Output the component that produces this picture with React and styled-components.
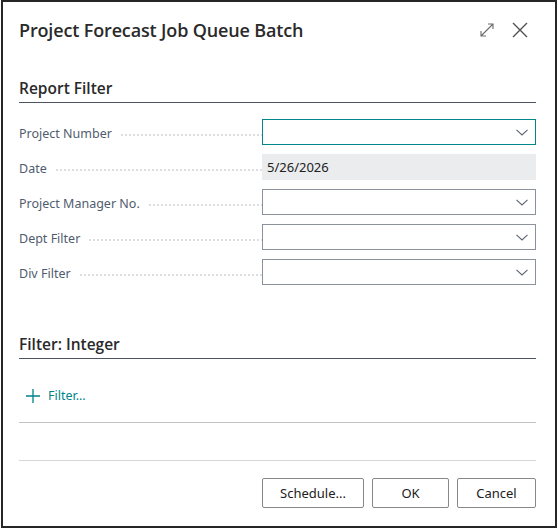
import React from "react";
import styled, { createGlobalStyle } from "styled-components";

const GlobalStyle = createGlobalStyle`
  html, body {
    margin: 0;
    padding: 0;
    background: #ffffff;
  }
  body {
    font-family: "Noto Sans", "Open Sans", sans-serif;
    color: #212121;
  }
`;

const fields = [
  { label: "Project Number", kind: "lookup", focused: true },
  { label: "Date", kind: "readonly", value: "5/26/2026" },
  { label: "Project Manager No.", kind: "lookup" },
  { label: "Dept Filter", kind: "lookup" },
  { label: "Div Filter", kind: "lookup" },
];

function Chevron() {
  return (
    <svg width="12" height="7" viewBox="0 0 12 7">
      <path d="M0.5 0.8 L6 6 L11.5 0.8" fill="none" stroke="#5c6472" strokeWidth="1.1" />
    </svg>
  );
}

function ExpandIcon() {
  return (
    <svg width="16" height="16" viewBox="0 0 16 16">
      <path
        d="M2 14 L14 2 M9 2 H14 V7 M2 9 V14 H7"
        fill="none"
        stroke="#6b6b6b"
        strokeWidth="1.1"
      />
    </svg>
  );
}

function CloseIcon() {
  return (
    <svg width="16" height="16" viewBox="0 0 16 16">
      <path d="M1 1 L15 15 M15 1 L1 15" fill="none" stroke="#505050" strokeWidth="1.4" />
    </svg>
  );
}

function PlusIcon() {
  return (
    <svg width="16" height="16" viewBox="0 0 16 16">
      <path d="M8 1 V15 M1 8 H15" fill="none" stroke="#00838a" strokeWidth="1.3" />
    </svg>
  );
}

export default function App() {
  return (
    <>
      <GlobalStyle />
      <Dialog>
        <Header>
          <Title>Project Forecast Job Queue Batch</Title>
          <HeaderActions>
            <IconButton aria-label="Expand">
              <ExpandIcon />
            </IconButton>
            <IconButton aria-label="Close">
              <CloseIcon />
            </IconButton>
          </HeaderActions>
        </Header>

        <SectionTitle>Report Filter</SectionTitle>
        <FieldList>
          {fields.map((field) => (
            <FieldRow key={field.label}>
              <Label>
                <span>{field.label}</span>
                <Leader />
              </Label>
              {field.kind === "readonly" ? (
                <ReadOnlyBox>{field.value}</ReadOnlyBox>
              ) : (
                <LookupBox $focused={field.focused}>
                  <Chevron />
                </LookupBox>
              )}
            </FieldRow>
          ))}
        </FieldList>

        <SectionTitle $gap={48}>Filter: Integer</SectionTitle>
        <FilterAction>
          <PlusIcon />
          <span>Filter...</span>
        </FilterAction>
        <Divider />

        <Footer>
          <Button $width={102}>Schedule...</Button>
          <Button $width={77}>OK</Button>
          <Button $width={79}>Cancel</Button>
        </Footer>
      </Dialog>
    </>
  );
}

const Dialog = styled.div`
  box-sizing: border-box;
  width: 556px;
  height: 528px;
  margin-left: 1px;
  border: 2px solid #262626;
  padding: 0 19px 0 16px;
  display: flex;
  flex-direction: column;
`;

const Header = styled.div`
  height: 56px;
  display: flex;
  align-items: center;
  justify-content: space-between;
`;

const Title = styled.h1`
  margin: 0;
  font-family: "Open Sans", "Noto Sans", sans-serif;
  font-size: 18px;
  font-weight: 600;
  color: #2a2a2a;
  letter-spacing: -0.15px;
`;

const HeaderActions = styled.div`
  display: flex;
  align-items: center;
  gap: 17px;
  margin-right: 8px;
`;

const IconButton = styled.button`
  border: none;
  background: none;
  padding: 0;
  display: flex;
  cursor: pointer;
`;

const SectionTitle = styled.h2`
  margin: ${(p) => p.$gap || 19}px 0 0;
  padding-bottom: 3px;
  font-family: "Open Sans", "Noto Sans", sans-serif;
  font-size: 15.5px;
  font-weight: 600;
  line-height: 22px;
  color: #2a2a2a;
  border-bottom: 1px solid #4d5564;
`;

const FieldList = styled.div`
  margin-top: 16px;
  display: flex;
  flex-direction: column;
  gap: 9px;
`;

const FieldRow = styled.div`
  display: flex;
  align-items: center;
  height: 26px;
`;

const Label = styled.div`
  width: 243px;
  padding-top: 3px;
  display: flex;
  align-items: center;
  gap: 8px;
  font-size: 12.5px;
  color: #505c6d;
  white-space: nowrap;
`;

const Leader = styled.span`
  flex: 1;
  height: 2px;
  margin-top: 3px;
  background-image: radial-gradient(circle, #c8cbd0 0.6px, transparent 0.9px);
  background-size: 4px 2px;
`;

const LookupBox = styled.div`
  box-sizing: border-box;
  margin-left: auto;
  width: 274px;
  height: 26px;
  border: 1px solid ${(p) => (p.$focused ? "#00868b" : "#8c929c")};
  display: flex;
  align-items: center;
  justify-content: flex-end;
  padding-right: 7px;
`;

const ReadOnlyBox = styled.div`
  box-sizing: border-box;
  margin-left: auto;
  width: 274px;
  height: 26px;
  background: #ebecee;
  display: flex;
  align-items: center;
  padding-left: 5px;
  font-size: 13px;
  color: #212121;
`;

const FilterAction = styled.div`
  margin-top: 28px;
  margin-left: 6px;
  display: flex;
  align-items: center;
  gap: 7px;
  font-size: 12.5px;
  color: #00838a;
`;

const Divider = styled.div`
  margin-top: 18px;
  border-top: 1px solid #bfc3c6;
`;

const Footer = styled.div`
  margin-top: auto;
  margin-bottom: 18px;
  border-top: 1px solid #d6d8da;
  padding-top: 17px;
  display: flex;
  justify-content: flex-end;
  gap: 8px;
`;

const Button = styled.button`
  box-sizing: border-box;
  width: ${(p) => p.$width}px;
  height: 30px;
  background: #ffffff;
  border: 1px solid #8a8886;
  border-radius: 2px;
  font-family: "Noto Sans", "Open Sans", sans-serif;
  font-size: 13px;
  color: #212121;
  cursor: pointer;
`;
